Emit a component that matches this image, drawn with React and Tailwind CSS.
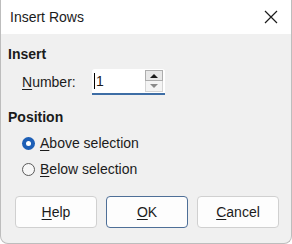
export default function App() {
  return (
    <div className="w-[292px] h-[244px] bg-white" style={{ fontFamily: '"Liberation Sans", Arial, sans-serif' }}>
      <div className="w-full h-full flex flex-col bg-[#f0f0f0] border border-t-0 border-[#bdbdbd] rounded-b-[8px] overflow-hidden text-[#1b1b1b]">
        <div className="h-[34px] bg-white flex items-center justify-between pl-[9px] pr-[12px] shrink-0">
          <span className="text-[14px]">Insert Rows</span>
          <svg width="14" height="14" viewBox="0 0 14 14" className="mr-[1px]">
            <path d="M1 1 L13 13 M13 1 L1 13" stroke="#1b1b1b" strokeWidth="1.2" />
          </svg>
        </div>
        <div className="flex flex-col px-[7px] text-[14px]">
          <div className="font-bold mt-[11px] leading-[18px]">Insert</div>
          <div className="flex items-center mt-[6px] pl-[14px]">
            <span className="w-[70px]"><u className="underline-offset-2">N</u>umber:</span>
            <div className="flex items-start h-[26px] w-[73px] bg-white border-b-2 border-[#3d6da5] rounded-t-[3px]">
              <div className="flex-1 flex items-center h-[24px] pl-[2px]">
                <span className="w-[1px] h-[16px] bg-black mr-[1px]" />
                <span>1</span>
              </div>
              <div className="flex flex-col mt-[1px] mr-[2px]">
                <div className="w-[18px] h-[11px] border border-[#adadad] bg-[#e8e8e8] flex items-center justify-center">
                  <svg width="8" height="5" viewBox="0 0 8 5"><path d="M0 5 L4 1 L8 5 Z" fill="#1b1b1b" /></svg>
                </div>
                <div className="w-[18px] h-[11px] border border-t-0 border-[#d4d4d4] bg-[#f4f4f4] flex items-center justify-center">
                  <svg width="8" height="5" viewBox="0 0 8 5"><path d="M0 0 L4 4 L8 0 Z" fill="#8a8a8a" /></svg>
                </div>
              </div>
            </div>
          </div>
          <div className="font-bold mt-[13px] leading-[18px]">Position</div>
          <div className="flex flex-col pl-[14px] mt-[8px] gap-[8px]">
            <label className="flex items-center gap-[5px] leading-[18px]">
              <span className="w-[13px] h-[13px] rounded-full bg-[#1d5fb6] flex items-center justify-center">
                <span className="w-[5px] h-[5px] rounded-full bg-white" />
              </span>
              <span><u className="underline-offset-2">A</u>bove selection</span>
            </label>
            <label className="flex items-center gap-[5px] leading-[18px]">
              <span className="w-[13px] h-[13px] rounded-full border border-[#5a5a5a] bg-[#f7f7f7]" />
              <span><u className="underline-offset-2">B</u>elow selection</span>
            </label>
          </div>
          <div className="flex gap-[9px] mt-[18px] pl-[7px]">
            <button className="w-[82px] h-[32px] bg-[#fdfdfd] border border-[#d0d0d0] rounded-[4px] text-[14px]"><u className="underline-offset-2">H</u>elp</button>
            <button className="w-[82px] h-[32px] bg-[#fdfdfd] border border-[#4e6f97] rounded-[4px] text-[14px]"><u className="underline-offset-2">O</u>K</button>
            <button className="w-[82px] h-[32px] bg-[#fdfdfd] border border-[#d0d0d0] rounded-[4px] text-[14px]"><u className="underline-offset-2">C</u>ancel</button>
          </div>
        </div>
      </div>
    </div>
  );
}
